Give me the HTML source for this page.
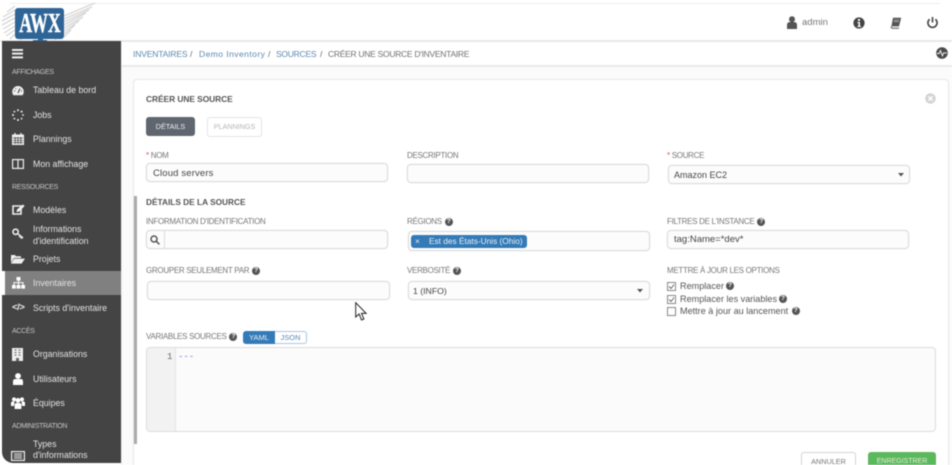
<!DOCTYPE html>
<html><head><meta charset="utf-8"><style>
html,body{margin:0;padding:0;width:952px;height:465px;overflow:hidden;background:#fff}
body{font-family:"Liberation Sans",sans-serif;position:relative;color:#707070;font-size:9px}
#root{position:absolute;left:0;top:0;width:952px;height:465px;overflow:hidden;filter:blur(.45px)}
.t{position:absolute;white-space:nowrap;line-height:12px}
.side{color:#e2e2e2;font-size:8.8px;left:33px}
.sec{color:#c4c4c4;font-size:7px;letter-spacing:-.3px;left:12px}
.lab{color:#777;font-size:8px;letter-spacing:-.3px}
.inp{position:absolute;height:17px;border:1px solid #dcdcdc;border-radius:4px;background:#fcfcfc;box-shadow:0 0 1px #ddd}
.val{color:#444;font-size:9px}
.opt{color:#555;font-size:9.1px}
.ic{position:absolute}
.q{display:inline-block;width:8px;height:8px;border-radius:50%;background:#555;color:#fff;font-size:6.5px;line-height:8px;text-align:center;font-weight:bold;vertical-align:top;margin:2px 0 0 1px;letter-spacing:0}
.cb{position:absolute;width:7px;height:7px;border:1px solid #888;background:#fff}
.bc{font-size:8.5px;top:48px;color:#5d87b0}
</style></head><body><div id="root">
<!-- top frame -->
<div style="position:absolute;left:10px;top:3px;width:930px;height:1px;background:#ececec"></div>
<div style="position:absolute;left:0;top:40px;width:952px;height:2px;background:#e8e8e8"></div>
<!-- logo wings -->
<svg class="ic" style="left:0;top:2px" width="100" height="42" viewBox="0 0 100 42" fill="none" stroke="#d6d6d6" stroke-width="1.3">
<path d="M15 4L7 10M15 8L3 15M15 12L2 19M15 16L2 23M15 20L3 27M15 24L4 31M15 28L6 34M15 32L10 37"/>
<path d="M64 14L95 1M64 17L92 5M64 20L89 8M64 23L86 11M64 26L83 15M64 29L79 19M64 32L75 23M64 35L71 28M55 38L60 33M20 38L25 34"/>
</svg>
<div style="position:absolute;left:15px;top:8px;width:49px;height:31px;background:#2f6596;border-radius:3px"></div>
<div style="position:absolute;left:38px;top:38px;width:5px;height:3px;background:#2f6596"></div>
<div style="position:absolute;left:33px;top:40px;width:14px;height:2px;background:#2f6596"></div>
<div class="t" style="left:-10px;top:8px;width:100px;text-align:center;color:#fff;font:bold 27px/30px 'Liberation Serif',serif;transform:scale(.66,1);-webkit-text-stroke:.5px #fff">AWX</div>
<!-- top right -->
<svg class="ic" style="left:786px;top:16px" width="12" height="13" viewBox="0 0 12 13" fill="#555"><circle cx="6" cy="3.2" r="3"/><path d="M1 13V9q0-3 3-3h4q3 0 3 3v4z"/></svg>
<div class="t" style="left:802px;top:17px;color:#777;font-size:9.5px">admin</div>
<svg class="ic" style="left:853px;top:17px" width="12" height="12" viewBox="0 0 12 12"><circle cx="6" cy="6" r="5.6" fill="#444"/><rect x="5" y="2" width="2" height="2" fill="#fff"/><path d="M4.4 5h2.6v4h1v1H4.4V9h1V6h-1z" fill="#fff"/></svg>
<svg class="ic" style="left:890px;top:17px" width="12" height="12" viewBox="0 0 12 12"><path d="M3 .8h8.2L9 9.4H1.4z" fill="#555"/><path d="M1.4 9.4q-.6 1.8 1 1.8H9" fill="none" stroke="#555" stroke-width="1"/><path d="M4.2 3h5M3.8 4.6h5" stroke="#ddd" stroke-width=".6"/></svg>
<svg class="ic" style="left:926px;top:16px" width="13" height="13" viewBox="0 0 13 13" fill="none" stroke="#444" stroke-width="1.6"><path d="M3.6 3.2a4.6 4.6 0 1 0 5.8 0"/><path d="M6.5 1v5.5"/></svg>
<!-- sidebar -->
<div style="position:absolute;left:2px;top:41px;width:119px;height:422px;background:#444;border-radius:0 0 0 11px"></div>
<div style="position:absolute;left:121px;top:42px;width:1px;height:423px;background:#f0f0f0"></div>
<div style="position:absolute;left:2px;top:271px;width:3px;height:24px;background:#fff"></div>
<div style="position:absolute;left:5px;top:271px;width:116px;height:24px;background:#808080"></div>
<svg class="ic" style="left:12px;top:49px" width="11" height="10" viewBox="0 0 11 10" fill="#eee"><rect width="11" height="2"/><rect y="3.6" width="11" height="2"/><rect y="7.4" width="11" height="2"/></svg>
<div class="t sec" style="top:67px">AFFICHAGES</div>
<div class="t side" style="top:84px">Tableau de bord</div>
<div class="t side" style="top:109px">Jobs</div>
<div class="t side" style="top:133px">Plannings</div>
<div class="t side" style="top:158px">Mon affichage</div>
<div class="t sec" style="top:182px">RESSOURCES</div>
<div class="t side" style="top:204px">Modèles</div>
<div class="t side" style="top:223px">Informations</div>
<div class="t side" style="top:235px">d'identification</div>
<div class="t side" style="top:253px">Projets</div>
<div class="t side" style="top:277px">Inventaires</div>
<div class="t side" style="top:302px">Scripts d'inventaire</div>
<div class="t sec" style="top:326px">ACCÈS</div>
<div class="t side" style="top:348px">Organisations</div>
<div class="t side" style="top:373px">Utilisateurs</div>
<div class="t side" style="top:397px">Équipes</div>
<div class="t sec" style="top:421px">ADMINISTRATION</div>
<div class="t side" style="top:438px">Types</div>
<div class="t side" style="top:449px">d'informations</div>
<!-- sidebar icons -->
<svg class="ic" style="left:12px;top:85px" width="12" height="11" viewBox="0 0 12 11"><path d="M6 1a5.8 5.8 0 0 0-5.8 5.8q0 2 1.2 3.4h9.2q1.2-1.4 1.2-3.4A5.8 5.8 0 0 0 6 1z" fill="#eee"/><path d="M6 8L8 3.5" stroke="#444" stroke-width="1.1"/><path d="M2 6h1M3.5 3.5l.6.6M9 6h1" stroke="#444"/></svg>
<svg class="ic" style="left:12px;top:109px" width="12" height="12" viewBox="0 0 12 12" fill="#eee"><circle cx="6" cy="1.3" r="1"/><circle cx="9.6" cy="2.6" r="1"/><circle cx="11" cy="6" r=".9"/><circle cx="9.6" cy="9.6" r=".9"/><circle cx="6" cy="11" r="1"/><circle cx="2.4" cy="9.6" r=".9"/><circle cx="1" cy="6" r="1"/><circle cx="2.4" cy="2.6" r=".9"/></svg>
<svg class="ic" style="left:12px;top:133px" width="12" height="12" viewBox="0 0 12 12"><rect y="1.5" width="12" height="10.5" fill="#eee"/><path d="M3 0v3M9 0v3" stroke="#eee" stroke-width="1.4"/><path d="M1 5h10M1 7.3h10M1 9.6h10M3.2 4v7M6 4v7M8.8 4v7" stroke="#444" stroke-width=".7"/></svg>
<svg class="ic" style="left:12px;top:159px" width="12" height="10" viewBox="0 0 12 10" fill="none" stroke="#eee" stroke-width="1.2"><rect x=".6" y=".6" width="10.8" height="8.8"/><path d="M6 .6v8.8"/></svg>
<svg class="ic" style="left:12px;top:204px" width="13" height="12" viewBox="0 0 13 12"><path d="M1 2h8v8H1z" fill="none" stroke="#eee" stroke-width="1.6"/><path d="M4.5 8L5 5.5 11 .5 12.6 2 7 7.8z" fill="#eee"/></svg>
<svg class="ic" style="left:12px;top:228px" width="12" height="12" viewBox="0 0 12 12"><circle cx="3.6" cy="3.8" r="2.6" fill="none" stroke="#eee" stroke-width="1.6"/><path d="M5.4 5.4L11 10M8.5 8l-1.2 1.4M10 9.4L9 10.6" stroke="#eee" stroke-width="1.5"/></svg>
<svg class="ic" style="left:11px;top:254px" width="14" height="10" viewBox="0 0 14 10" fill="#eee"><path d="M0 9V1h4l1 1.2h5V4H3z"/><path d="M0 9.6L3.2 4.6H14L10.6 9.6z"/></svg>
<svg class="ic" style="left:12px;top:277px" width="13" height="12" viewBox="0 0 13 12" fill="#fff"><rect x="4.5" y="0" width="4" height="3.6"/><rect x="0" y="8" width="3.8" height="3.6"/><rect x="4.6" y="8" width="3.8" height="3.6"/><rect x="9.2" y="8" width="3.8" height="3.6"/><path d="M2 8V5.6h9V8M6.5 3.6V8" fill="none" stroke="#fff"/></svg>
<div class="t" style="left:12px;top:302px;color:#eee;font-size:9.5px;font-weight:bold;letter-spacing:-.4px">&lt;/&gt;</div>
<svg class="ic" style="left:12px;top:348px" width="11" height="13" viewBox="0 0 11 13"><rect width="11" height="13" fill="#eee"/><path d="M2.5 2h2M6.5 2h2M2.5 4.5h2M6.5 4.5h2M2.5 7h2M6.5 7h2" stroke="#666" stroke-width="1"/><rect x="4" y="10" width="3" height="3" fill="#666"/></svg>
<svg class="ic" style="left:13px;top:373px" width="10" height="12" viewBox="0 0 10 12" fill="#fff"><circle cx="5" cy="3" r="2.9"/><path d="M0 12V8.5Q0 6 2.5 6h5Q10 6 10 8.5V12z"/></svg>
<svg class="ic" style="left:11px;top:397px" width="14" height="12" viewBox="0 0 14 12" fill="#fff"><circle cx="3" cy="2.4" r="2"/><circle cx="11" cy="2.4" r="2"/><circle cx="7" cy="3.4" r="2.4"/><path d="M0 8V6q0-1.5 1.5-1.5h2L3 9H0zM14 8V6q0-1.5-1.5-1.5h-2L11 9h3z"/><path d="M3.6 12V8q0-2 2-2h2.8q2 0 2 2v4z"/></svg>
<svg class="ic" style="left:11px;top:451px" width="14" height="10" viewBox="0 0 14 10"><rect x=".6" y=".6" width="12.8" height="8.8" fill="none" stroke="#eee" stroke-width="1.2"/><path d="M3 3h8M3 5h8M3 7h8" stroke="#eee"/></svg>
<!-- breadcrumb -->
<div style="position:absolute;left:122px;top:65px;width:830px;height:2px;background:#e9e9e9"></div>
<div style="position:absolute;left:122px;top:67px;width:830px;height:398px;background:#fbfbfb"></div>
<div class="t bc" style="left:133px;letter-spacing:-.15px">INVENTAIRES</div>
<div class="t bc" style="left:190px;color:#666">/</div>
<div class="t bc" style="left:199px;letter-spacing:.45px">Demo Inventory</div>
<div class="t bc" style="left:268px;color:#666">/</div>
<div class="t bc" style="left:276px;letter-spacing:-.25px">SOURCES</div>
<div class="t bc" style="left:320px;color:#666">/</div>
<div class="t bc" style="left:328px;color:#707070;letter-spacing:-.28px">CRÉER UNE SOURCE D'INVENTAIRE</div>
<svg class="ic" style="left:936px;top:47px" width="12" height="12" viewBox="0 0 12 12"><circle cx="6" cy="6" r="5.8" fill="#4a4a4a"/><path d="M1 6.5h2.2l1.2-3 2 5.4 1.2-3H11" fill="none" stroke="#fff" stroke-width=".9"/></svg>
<!-- card -->
<div style="position:absolute;left:133px;top:79px;width:814px;height:390px;background:#fff;border:1px solid #e6e6e6;border-radius:4px"></div>
<div style="position:absolute;left:134px;top:196px;width:3px;height:248px;background:#aaa"></div>
<div class="t" style="left:146px;top:93px;font-size:8.4px;letter-spacing:-.05px;font-weight:bold;color:#555">CRÉER UNE SOURCE</div>
<svg class="ic" style="left:925px;top:93px" width="11" height="11" viewBox="0 0 11 11"><circle cx="5.5" cy="5.5" r="5.3" fill="#d4d4d4"/><path d="M3.5 3.5l4 4M7.5 3.5l-4 4" stroke="#fff" stroke-width="1.5"/></svg>
<div style="position:absolute;left:146px;top:117px;width:49px;height:19px;background:#5f6670;border-radius:3px;color:#f0f0f0;font-size:7.2px;line-height:19px;text-align:center">DÉTAILS</div>
<div style="position:absolute;left:207px;top:117px;width:53px;height:18px;background:#fff;border:1px solid #e4e4e4;border-radius:3px;color:#b5b5b5;font-size:7.2px;line-height:18px;text-align:center">PLANNINGS</div>
<!-- row 1 -->
<div class="t lab" style="left:146px;top:150px"><span style="color:#d9534f">*</span> NOM</div>
<div class="inp" style="left:146px;top:163px;width:240px"></div>
<div class="t val" style="left:153px;top:168px;font-size:9.5px;letter-spacing:.15px">Cloud servers</div>
<div class="t lab" style="left:407px;top:150px">DESCRIPTION</div>
<div class="inp" style="left:407px;top:164px;width:240px"></div>
<div class="t lab" style="left:667px;top:150px"><span style="color:#d9534f">*</span> SOURCE</div>
<div class="inp" style="left:668px;top:165px;width:240px;height:17px"></div>
<div class="t val" style="left:674px;top:169px">Amazon EC2</div>
<svg class="ic" style="left:898px;top:173px" width="6" height="4"><path d="M0 0h6L3 3.5z" fill="#555"/></svg>
<div class="t" style="left:146px;top:196px;font-size:8.3px;font-weight:bold;color:#555">DÉTAILS DE LA SOURCE</div>
<!-- row 2 -->
<div class="t lab" style="left:146px;top:216px">INFORMATION D'IDENTIFICATION</div>
<div class="inp" style="left:146px;top:230px;width:240px"></div>
<div style="position:absolute;left:164px;top:231px;width:1px;height:17px;background:#dcdcdc"></div>
<svg class="ic" style="left:150px;top:235px" width="10" height="10" viewBox="0 0 10 10" fill="none" stroke="#555" stroke-width="1.5"><circle cx="4" cy="4" r="3"/><path d="M6.2 6.2L9.4 9.4"/></svg>
<div class="t lab" style="left:407px;top:216px">RÉGIONS <span class="q">?</span></div>
<div class="inp" style="left:408px;top:231px;width:240px;height:18px"></div>
<div style="position:absolute;left:411px;top:235px;width:116px;height:13px;background:#337ab7;border-radius:3px"></div>
<div class="t" style="left:415px;top:236px;color:#e8f0f8;font-size:8.3px;line-height:11px">×</div>
<div class="t" style="left:429px;top:236px;color:#e8f0f8;font-size:8.3px;line-height:11px">Est des États-Unis (Ohio)</div>
<div class="t lab" style="left:667px;top:216px">FILTRES DE L'INSTANCE <span class="q">?</span></div>
<div class="inp" style="left:667px;top:230px;width:240px"></div>
<div class="t val" style="left:674px;top:234px;font-size:9.5px">tag:Name=*dev*</div>
<!-- row 3 -->
<div class="t lab" style="left:146px;top:265px">GROUPER SEULEMENT PAR <span class="q">?</span></div>
<div class="inp" style="left:147px;top:281px;width:241px"></div>
<div class="t lab" style="left:407px;top:265px">VERBOSITÉ <span class="q">?</span></div>
<div class="inp" style="left:408px;top:281px;width:240px"></div>
<div class="t val" style="left:413px;top:285px;font-size:8.7px">1 (INFO)</div>
<svg class="ic" style="left:637px;top:289px" width="6" height="4"><path d="M0 0h6L3 3.5z" fill="#555"/></svg>
<div class="t lab" style="left:667px;top:265px">METTRE À JOUR LES OPTIONS</div>
<div class="cb" style="left:667px;top:282px"></div>
<div class="cb" style="left:667px;top:295px"></div>
<div class="cb" style="left:667px;top:307px"></div>
<svg class="ic" style="left:667px;top:282px" width="9" height="22" fill="none" stroke="#666"><path d="M2 4.5l2 2 3-4M2 17.5l2 2 3-4"/></svg>
<div class="t opt" style="left:680px;top:280px">Remplacer<span class="q" style="margin-left:2px">?</span></div>
<div class="t opt" style="left:680px;top:293px">Remplacer les variables<span class="q" style="margin-left:2px">?</span></div>
<div class="t opt" style="left:680px;top:305px">Mettre à jour au lancement <span class="q">?</span></div>
<!-- variables -->
<div class="t lab" style="left:146px;top:331px">VARIABLES SOURCES <span class="q">?</span></div>
<div style="position:absolute;left:243px;top:331px;width:32px;height:13px;background:#337ab7;border-radius:3px 0 0 3px;color:#e8f0f8;font-size:7.5px;line-height:13px;text-align:center">YAML</div>
<div style="position:absolute;left:275px;top:331px;width:31px;height:11px;background:#fff;border:1px solid #a9c6e0;border-left:0;border-radius:0 3px 3px 0;color:#5d87b0;font-size:7.5px;line-height:12px;text-align:center">JSON</div>
<div style="position:absolute;left:146px;top:347px;width:788px;height:83px;background:#fbfbfb;border:1px solid #dcdcdc;border-radius:4px"></div>
<div style="position:absolute;left:147px;top:348px;width:28px;height:83px;background:#f2f2f2;border-right:1px solid #e4e4e4;border-radius:4px 0 0 4px"></div>
<div class="t" style="left:167px;top:351px;font:9px/12px 'Liberation Mono',monospace;color:#666">1</div>
<div class="t" style="left:178px;top:351px;font:bold 9px/12px 'Liberation Mono',monospace;color:#a8a8f0">---</div>
<!-- buttons -->
<div style="position:absolute;left:801px;top:452px;width:53px;height:20px;background:#fff;border:1px solid #d4d4d4;border-radius:3px;color:#777;font-size:7.3px;line-height:18px;text-align:center">ANNULER</div>
<div style="position:absolute;left:868px;top:452px;width:68px;height:22px;background:#5cb85c;border-radius:3px;color:#dff0d8;font-size:7px;line-height:20px;text-align:center">ENREGISTRER</div>
<!-- cursor -->
<svg class="ic" style="left:355px;top:302px" width="13" height="20" viewBox="0 0 13 20"><path d="M.7.7V15l3.4-3 2.4 6 2.4-1-2.4-5.6h4.6z" fill="#fff" stroke="#222" stroke-width="1"/></svg>
</div></body></html>
